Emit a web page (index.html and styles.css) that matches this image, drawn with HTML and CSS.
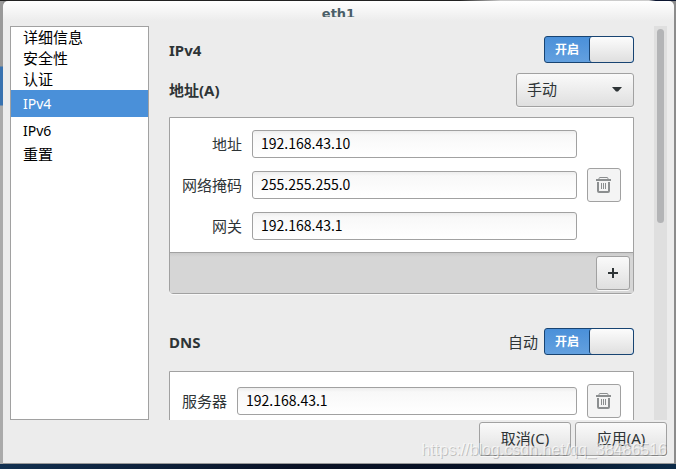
FILE: index.html
```html
<!DOCTYPE html>
<html lang="zh-CN">
<head>
    <meta charset="UTF-8">
    <meta name="viewport" content="width=device-width, initial-scale=1.0">
    <title>eth1</title>
    <link rel="stylesheet" href="styles.css">
</head>
<body>
    <div class="dialog">
        <header class="titlebar"><h1>eth1</h1></header>

        <div class="content">
            <nav class="sidebar">
                <a href="#details">详细信息</a>
                <a href="#security">安全性</a>
                <a href="#identity">认证</a>
                <a href="#ipv4" class="tall active">IPv4</a>
                <a href="#ipv6" class="tall">IPv6</a>
                <a href="#reset">重置</a>
            </nav>

            <main class="pane">
                <div class="row">
                    <h2 id="ipv4">IPv4</h2>
                    <label class="switch">
                        <input type="checkbox" aria-label="IPv4" checked>
                        <span class="switch-text">开启</span>
                        <span class="switch-thumb"></span>
                    </label>
                </div>

                <div class="row method">
                    <label class="heading" for="method">地址(A)</label>
                    <div class="combo">
                        <select id="method">
                            <option>手动</option>
                        </select>
                        <svg width="10" height="5" viewBox="0 0 10 5"><path d="M0 0h10L6 4.500H4z" fill="#2e3436"/></svg>
                    </div>
                </div>

                <section class="card">
                    <div class="card-body">
                        <div class="fields">
                            <label for="address">地址</label>
                            <input type="text" id="address" value="192.168.43.10">
                            <label for="netmask">网络掩码</label>
                            <input type="text" id="netmask" value="255.255.255.0">
                            <label for="gateway">网关</label>
                            <input type="text" id="gateway" value="192.168.43.1">
                        </div>
                        <button type="button" class="icon-button flat" aria-label="删除地址">
                            <svg width="16" height="16" viewBox="0 0 16 16" fill="none" stroke="#8b8e8f">
                                <path d="M3 2V1.500Q3 .5 4 .5h7q1 0 1 1V2"/>
                                <path d="M0 3h15" stroke-width="2"/>
                                <path d="M2 5v9q0 1 1 1h9q1 0 1-1V5" stroke-width="2"/>
                                <path d="M5.500 6v6M7.500 6v6M9.500 6v6"/>
                            </svg>
                        </button>
                    </div>
                    <div class="toolbar">
                        <button type="button" class="icon-button" aria-label="添加地址">
                            <svg width="10" height="10" viewBox="0 0 10 10" stroke="#2e3436" stroke-width="2"><path d="M0 5h10M5 0v10"/></svg>
                        </button>
                    </div>
                </section>

                <div class="row dns">
                    <h2>DNS</h2>
                    <label class="auto" for="dns-auto">自动</label>
                    <label class="switch">
                        <input type="checkbox" id="dns-auto" checked>
                        <span class="switch-text">开启</span>
                        <span class="switch-thumb"></span>
                    </label>
                </div>

                <section class="card">
                    <div class="card-body">
                        <div class="fields">
                            <label for="server">服务器</label>
                            <input type="text" id="server" value="192.168.43.1">
                        </div>
                        <button type="button" class="icon-button flat" aria-label="删除服务器">
                            <svg width="16" height="16" viewBox="0 0 16 16" fill="none" stroke="#8b8e8f">
                                <path d="M3 2V1.500Q3 .5 4 .5h7q1 0 1 1V2"/>
                                <path d="M0 3h15" stroke-width="2"/>
                                <path d="M2 5v9q0 1 1 1h9q1 0 1-1V5" stroke-width="2"/>
                                <path d="M5.500 6v6M7.500 6v6M9.500 6v6"/>
                            </svg>
                        </button>
                    </div>
                </section>
            </main>

            <div class="scrollbar"><div class="scroll-thumb"></div></div>
        </div>

        <footer class="actions">
            <button type="button">取消(C)</button>
            <button type="submit">应用(A)</button>
        </footer>
        <div class="watermark">https://blog.csdn.net/qq_38486516</div>
    </div>
</body>
</html>
```
FILE: styles.css
```css
* {
    box-sizing: border-box;
}
body {
    margin: 0;
    height: 100vh;
    padding: 1px 2px 5px 3px;
    background:
        linear-gradient(90deg, #222 0 68%, #ccc 74% 96%, #0b1530 97%) top / 100% 1px no-repeat,
        linear-gradient(90deg, #123050, #0a1124 45%, #071226 75%, #0c2b48) bottom / 100% 5px no-repeat,
        linear-gradient(#999 66px, #3872b0 67px 105px, #aaa 106px) left / 3px 100% no-repeat,
        #8c8c8c;
    font-family: "Noto Sans", "Noto Sans CJK SC", sans-serif;
    font-size: 15px;
    line-height: 20px;
    color: #2e3436;
}
.dialog {
    position: relative;
    display: flex;
    flex-direction: column;
    height: 100%;
    padding: 0 7px;
    background: linear-gradient(#fff, #ececec 20px);
    border-bottom: 1px solid #999;
    border-radius: 5px 5px 0 0;
}

/* the title is cut off by the short bar */
.titlebar {
    height: 16px;
    margin-bottom: 9px;
    overflow: hidden;
    text-align: center;
}
h1 {
    margin: 0;
    font: bold 13px/25px "DejaVu Sans", sans-serif;
    color: #4a5f68;
}
h2, .heading {
    margin: 0;
    font-size: 15px;
    font-weight: bold;
}
.content {
    display: flex;
    flex: 1;
    min-height: 0;
}

/* sidebar */
.sidebar {
    width: 139px;
    background: #fff;
    border: 1px solid #a1a1a1;
}
.sidebar a {
    display: block;
    padding-left: 12px;
    line-height: 21px;
    color: #000;
    text-decoration: none;
}
.sidebar .tall {
    font-size: 14px;
    line-height: 27px;
}
.sidebar .active {
    background: #4a90d9;
    color: #fff;
}

/* settings pane */
.pane {
    flex: 1;
    padding: 10px 20px 0;
    overflow: hidden;
}
.row {
    display: flex;
    align-items: center;
    height: 27px;
}
.row h2, .row .heading {
    flex: 1;
}
.method {
    height: 34px;
    margin: 10px 0;
}
.dns {
    margin: 34px 0 16px;
}
.auto {
    margin-right: 6px;
}
.switch {
    position: relative;
    display: flex;
    width: 90px;
    height: 27px;
    border: 1px solid #184472;
    border-radius: 3px;
    background: linear-gradient(#4a90d9, #63a0df);
    overflow: hidden;
}
.switch input {
    position: absolute;
    inset: 0;
    margin: 0;
    opacity: 0;
}
.switch-text {
    flex: 1;
    font-size: 12px;
    font-weight: bold;
    line-height: 25px;
    text-align: center;
    color: #fff;
}
.switch-thumb {
    width: 44px;
    border-left: 1px solid #184472;
    border-radius: 3px;
    background: linear-gradient(#fcfcfc, #dfdfdf);
}
.combo {
    position: relative;
}
.combo svg {
    position: absolute;
    right: 12px;
    top: 14px;
    pointer-events: none;
}
select, button {
    height: 34px;
    border: 1px solid #a1a1a1;
    border-radius: 3px;
    background: linear-gradient(#fafafa, #dfdfdf);
    box-shadow: 0 1px #f8f8f8;
    font: inherit;
    color: #2e3436;
}
select {
    display: block;
    width: 118px;
    padding: 0 10px 2px;
    appearance: none;
}

/* cards */
.card {
    background: #fff;
    border: 1px solid #a1a1a1;
    border-radius: 0 0 4px 4px;
    box-shadow: 0 1px #f8f8f8;
}
.card-body {
    display: flex;
    align-items: center;
    gap: 10px;
    padding: 12px;
}
.fields {
    flex: 1;
    display: grid;
    grid-template-columns: auto 1fr;
    align-items: center;
    gap: 13px 10px;
}
.fields label {
    text-align: right;
}
.fields input {
    width: 100%;
    height: 28px;
    padding: 0 8px 2px;
    border: 1px solid #a1a1a1;
    border-radius: 3px;
    background: linear-gradient(#ededed, #f8f8f8 4px, #fff);
    font: 14px "Noto Sans CJK SC", sans-serif;
    color: #000;
}
.icon-button {
    display: flex;
    align-items: center;
    justify-content: center;
    width: 34px;
    padding: 0;
}
.flat {
    background: #f4f4f4;
    box-shadow: none;
}
.toolbar {
    display: flex;
    justify-content: flex-end;
    padding: 3px;
    border-top: 1px solid #a1a1a1;
    background: linear-gradient(#cacaca, #d6d6d6 4px);
}

/* scrollbar */
.scrollbar {
    width: 13px;
    padding: 3px;
    background: #dfdfdf;
}
.scroll-thumb {
    height: 50%;
    border-radius: 4px;
    background: #b3b4b6;
}

/* bottom buttons */
.actions {
    display: flex;
    justify-content: flex-end;
    gap: 4px;
    margin: 2px 0 7px;
}
.actions button {
    width: 92px;
    padding: 0 0 2px;
}
.watermark {
    position: absolute;
    right: 7px;
    bottom: 3px;
    font: 16px/20px "Liberation Sans", sans-serif;
    color: rgba(255, 255, 255, 0.6);
    text-shadow: 1px 1px rgba(0, 0, 0, 0.2);
    pointer-events: none;
}
```
